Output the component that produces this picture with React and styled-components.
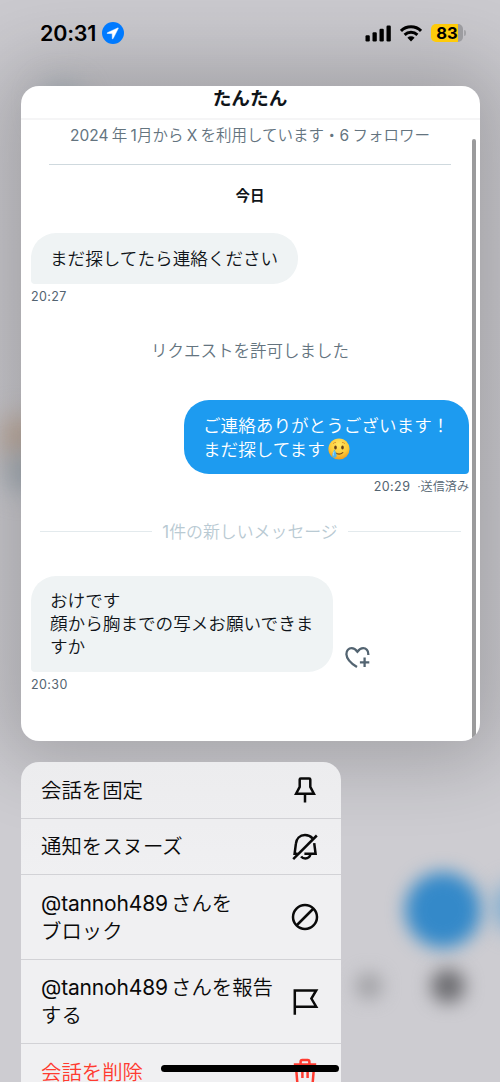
import React from 'react'
import styled, { createGlobalStyle } from 'styled-components'

const StatusBar = () => (
    <Status>
        <Clock>
            <Time>20:31</Time>
            <svg width="22" height="22" viewBox="0 0 22 22">
                <circle cx="11" cy="11" r="11" fill="#007aff" />
                <path d="M15.8 5.9 5.3 10.8q-.7.5.2.7l4.7.1.1 4.9q.3.8.8.1L16.3 6.3q.1-.6-.5-.4z" fill="#fff" stroke="#fff" strokeWidth=".5" strokeLinejoin="round" />
            </svg>
        </Clock>
        <Signals>
            <svg width="26" height="17" viewBox="0 0 26 17">
                <rect x="0.5" y="10.3" width="4.3" height="6.2" rx="1.2" />
                <rect x="7.5" y="7.3" width="4.3" height="9.2" rx="1.2" />
                <rect x="14.5" y="3.8" width="4.3" height="12.7" rx="1.2" />
                <rect x="21.5" y="0.5" width="4.3" height="16" rx="1.2" />
            </svg>
            <svg width="22" height="17" viewBox="0 0 22 17" fill="none" stroke="#000" strokeWidth="2.9">
                <path d="M1 5.9a14.3 14.3 0 0 1 20 0" />
                <path d="M4.6 9.9a9.2 9.2 0 0 1 12.8 0" />
                <path d="M7.4 12.8a5.2 5.2 0 0 1 7.2 0L11 16.4z" fill="#000" stroke="none" />
            </svg>
            <Battery>
                <Level>83</Level>
                <Tip />
            </Battery>
        </Signals>
    </Status>
)

const TearFace = () => (
    <Emoji viewBox="0 0 22 22">
        <defs>
            <radialGradient id="face" cx=".5" cy=".3" r=".75">
                <stop offset="0" stopColor="#ffe765" />
                <stop offset=".6" stopColor="#fdc936" />
                <stop offset="1" stopColor="#ec8f19" />
            </radialGradient>
        </defs>
        <circle cx="11" cy="11" r="10.6" fill="url(#face)" />
        <path d="M5 5.8q1.2-1.5 3-1.4M14 4.4q1.8-.1 3 1.4" fill="none" stroke="#d8922a" strokeWidth=".9" />
        <ellipse cx="7.5" cy="9.4" rx="1.3" ry="2" fill="#68401a" />
        <ellipse cx="14.5" cy="9.4" rx="1.3" ry="2" fill="#68401a" />
        <path d="M7.2 14.6q3.9 3.2 7.6 0" fill="none" stroke="#7c4a18" strokeWidth="1.2" strokeLinecap="round" />
        <path d="M6.4 11.2q-2.3 4.3-2.2 6.3.2 2.2 2.3 2.3 2.2-.1 2.2-2.4 0-2-2.3-6.2z" fill="#4eb5ee" />
        <path d="M6.1 13.5q-1.1 2.2-.8 4" fill="none" stroke="#b5e7ff" strokeWidth=".9" />
    </Emoji>
)

const AddReaction = () => (
    <svg width="26" height="22" viewBox="0 0 26 22" fill="none" stroke="#536471" strokeWidth="2.3">
        <path d="M12 20.1C5.6 16.1 1.6 12 1.4 7.2 1.3 3.4 3.8 1.2 6.6 1.2c2.6 0 4.3 1.5 5.8 3.5 1.5-2 3.2-3.5 5.8-3.5 2.8 0 5.2 2.2 5.1 5.9v1" />
        <path d="M19.6 10.6v9.3M14.9 15.3h9.4" />
    </svg>
)

const PinIcon = () => (
    <Icon viewBox="0 0 28 28">
        <path d="M9.8 2.4h8.4q1.1 0 1.1 1.1v7.4l3.6 6.8H5.1l3.6-6.8V3.5q0-1.1 1.1-1.1zM14 17.7v8.9" />
    </Icon>
)

const BellOffIcon = () => (
    <Icon viewBox="0 0 28 28">
        <path d="M2.2 26.1 25.8 2.5" />
        <path d="M21.6 5.3C19.6 3.1 17 2 14 2c-5.3 0-8.7 3.8-9.1 8.7L3.6 20.8h3M23.2 10.2l1.4 10.6H13.4M19.5 21.2c-.7 2.6-2.7 4.2-5.2 4.2-1.8 0-3.2-.7-4.2-2" />
    </Icon>
)

const BlockIcon = () => (
    <Icon viewBox="0 0 28 28">
        <circle cx="14" cy="14" r="12" />
        <path d="M5.5 22.5 22.5 5.5" />
    </Icon>
)

const FlagIcon = () => (
    <Icon viewBox="0 0 28 28">
        <path d="M3.8 26.8V2.5h21.4l-4.8 8.1 4.8 8.1H3.8" />
    </Icon>
)

const TrashIcon = () => (
    <Icon viewBox="0 0 28 28">
        <path d="M2.8 6.5h22.4M9.6 6.3V3.8q0-1.7 1.7-1.7h5.4q1.7 0 1.7 1.7v2.5M4.8 6.5l1.5 18q.2 1.7 1.9 1.7h11.6q1.7 0 1.9-1.7l1.5-18M11.4 11v9M16.6 11v9" />
    </Icon>
)

const actions = [
    { lines: ['会話を固定'], icon: <PinIcon /> },
    { lines: ['通知をスヌーズ'], icon: <BellOffIcon /> },
    { handle: '@tannoh489', lines: ['さんを', 'ブロック'], icon: <BlockIcon /> },
    { handle: '@tannoh489', lines: ['さんを報告', 'する'], icon: <FlagIcon /> },
    { lines: ['会話を削除'], icon: <TrashIcon />, danger: true },
]

const App = () => {
    return (
        <Screen>
            <GlobalStyle />
            <Backdrop>
                <Blob $x={443} $y={910} $size={76} $blur={9} $color="#3489c9" />
                <Blob $x={518} $y={907} $size={50} $blur={11} $color="#7dacd0" />
                <Blob $x={369} $y={986} $size={26} $blur={9} $color="#a0a0a4" />
                <Blob $x={448} $y={986} $size={34} $blur={9} $color="#6c6c70" />
                <Blob $x={20} $y={438} $size={44} $blur={14} $color="#c0aa9a" />
                <Blob $x={24} $y={472} $size={40} $blur={13} $color="#a3adb6" />
                <Blob $x={62} $y={104} $size={40} $blur={14} $color="#a9b5bd" />
            </Backdrop>
            <StatusBar />
            <Preview>
                <Header>たんたん</Header>
                <Thread>
                    <Joined><Num>2024</Num> 年 <Num>1</Num>月から <Num>X</Num> を利用しています・<Num>6</Num> フォロワー</Joined>
                    <Day>今日</Day>
                    <Bubble $width={267} $height={51}>まだ探してたら連絡ください</Bubble>
                    <Stamp>20:27</Stamp>
                    <Notice>リクエストを許可しました</Notice>
                    <Bubble $mine $width={285} $height={74}>
                        ご連絡ありがとうございます！<br />
                        まだ探してます<TearFace />
                    </Bubble>
                    <Stamp $mine>20:29 <small>·送信済み</small></Stamp>
                    <Unread><span><Num>1</Num>件の新しいメッセージ</span></Unread>
                    <Incoming>
                        <Bubble $width={302} $height={96}>
                            おけです<br />
                            顔から胸までの写メお願いできま<br />
                            すか
                        </Bubble>
                        <AddReaction />
                    </Incoming>
                    <Stamp>20:30</Stamp>
                </Thread>
                <Scrollbar />
            </Preview>
            <Menu>
                {actions.map((a) => (
                    <Action key={a.lines.join('')} $danger={a.danger} $tall={a.lines.length > 1}>
                        <Label>
                            {a.handle && <Handle>{a.handle}</Handle>}
                            {a.lines[0]}
                            {a.lines[1] && <><br />{a.lines[1]}</>}
                        </Label>
                        {a.icon}
                    </Action>
                ))}
            </Menu>
            <HomeIndicator />
        </Screen>
    )
}

export default App

const GlobalStyle = createGlobalStyle`
    body {
        margin: 0;
        font-family: Inter, "Noto Sans CJK JP", sans-serif;
        font-weight: 350;
    }

    * {
        box-sizing: border-box;
    }
`
const Screen = styled.div`
    position: relative;
    width: 500px;
    height: 1082px;
    overflow: hidden;
    background: linear-gradient(#cac9ce, #cdccd1 800px);
`
const Backdrop = styled.div`
    position: absolute;
    inset: 0;
    overflow: hidden;
`
const Blob = styled.div`
    position: absolute;
    left: ${(p) => p.$x - p.$size / 2}px;
    top: ${(p) => p.$y - p.$size / 2}px;
    width: ${(p) => p.$size}px;
    height: ${(p) => p.$size}px;
    border-radius: 50%;
    background: ${(p) => p.$color};
    filter: blur(${(p) => p.$blur}px);
`
const Status = styled.div`
    position: relative;
    z-index: 1;
    height: 86px;
    padding: 22px 34px 0 40px;
    display: flex;
    justify-content: space-between;
    align-items: flex-start;
`
const Clock = styled.div`
    display: flex;
    align-items: center;
    gap: 4px;
    height: 22px;
`
const Time = styled.span`
    width: 57.5px;
    font-size: 21.5px;
    font-weight: 600;
    letter-spacing: -0.2px;
    white-space: nowrap;
`
const Signals = styled.div`
    display: flex;
    align-items: center;
    gap: 9px;
    height: 22px;
`
const Battery = styled.div`
    display: flex;
    align-items: center;
    gap: 1px;
`
const Level = styled.div`
    width: 32px;
    height: 18px;
    border-radius: 5px;
    background: linear-gradient(90deg, #fecb0a 83%, #9c9ca0 83%);
    font-size: 16.5px;
    font-weight: 700;
    line-height: 18px;
    text-align: center;
`
const Tip = styled.div`
    width: 2px;
    height: 6px;
    border-radius: 0 3px 3px 0;
    background: #a3a3a7;
`
const Preview = styled.div`
    position: relative;
    width: 459px;
    height: 655px;
    margin-left: 20.5px;
    border-radius: 18px;
    overflow: hidden;
    background: #fff;
    box-shadow: 0 0 76px 22px rgba(0, 0, 0, 0.2);
`
const Header = styled.div`
    height: 34px;
    padding-top: 1px;
    border-bottom: 2px solid #f5f5f6;
    color: #0f1419;
    font-size: 18.7px;
    font-weight: 700;
    line-height: 24px;
    text-align: center;
`
const Thread = styled.div`
    display: flex;
    flex-direction: column;
    padding: 0 10.5px;
`
const Num = styled.span`
    font-weight: 400;
`
const Joined = styled.div`
    height: 45px;
    margin: 0 18px;
    border-bottom: 1.5px solid #cfd9de;
    color: #64747f;
    font-size: 15.5px;
    line-height: 32px;
    text-align: center;
    white-space: nowrap;
    word-spacing: -1.1px;
`
const Day = styled.div`
    height: 68px;
    color: #0f1419;
    font-size: 14.5px;
    font-weight: 700;
    line-height: 62px;
    text-align: center;
`
const Bubble = styled.div`
    flex: none;
    align-self: ${(p) => (p.$mine ? 'flex-end' : 'flex-start')};
    width: ${(p) => p.$width}px;
    height: ${(p) => p.$height}px;
    padding: ${(p) => (p.$height > 90 ? 14 : 15)}px 0 0 19px;
    border-radius: ${(p) => (p.$mine ? '25px 25px 4px 25px' : '25px 25px 25px 4px')};
    background: ${(p) => (p.$mine ? '#1d9bf0' : '#eff3f4')};
    color: ${(p) => (p.$mine ? '#fff' : '#0f1419')};
    font-size: 17.6px;
    line-height: 22.9px;
    white-space: nowrap;
`
const Emoji = styled.svg`
    width: 22px;
    height: 22px;
    margin-left: 3.5px;
    vertical-align: -4.5px;
`
const Stamp = styled.div`
    height: 24px;
    color: #536471;
    font-size: 12.5px;
    font-weight: 400;
    letter-spacing: 0.4px;
    line-height: 25px;
    text-align: ${(p) => (p.$mine ? 'right' : 'left')};

    small{
        margin-left: 3px;
        font-size: 12.1px;
        font-weight: 350;
        letter-spacing: 0;
    }
`
const Notice = styled.div`
    height: 92px;
    color: #64747f;
    font-size: 16.5px;
    line-height: 86px;
    text-align: center;
`
const Unread = styled.div`
    display: flex;
    align-items: center;
    justify-content: center;
    height: 78px;
    padding: 0 8.5px 11px;
    color: #b9cad3;
    font-size: 16.9px;
    white-space: nowrap;

    span{
        margin-bottom: 1.5px;
    }

    &::before, &::after{
        content: '';
        flex: 1;
        height: 1px;
        background: #e3eaed;
    }

    &::before{
        margin-right: 10px;
    }

    &::after{
        margin-left: 10px;
    }
`
const Incoming = styled.div`
    display: flex;
    align-items: flex-end;
    gap: 12px;

    svg{
        margin-bottom: 3px;
    }
`
const Scrollbar = styled.div`
    position: absolute;
    top: 53px;
    right: 3.5px;
    width: 4px;
    height: 602px;
    border-radius: 2px;
    background: #9b9b9c;
`
const Menu = styled.div`
    position: relative;
    width: 320.5px;
    height: 340px;
    margin: 21px 0 0 20.5px;
    border-radius: 18px;
    overflow: hidden;
    background: linear-gradient(#ececee, #f0f0f2 120px);
`
const Action = styled.div`
    display: flex;
    align-items: center;
    justify-content: space-between;
    height: ${(p) => (p.$tall ? 84.5 : 56.5)}px;
    padding: 1px 22px 0 20.5px;
    border-bottom: 1px solid #d2d2d6;
    color: ${(p) => (p.$danger ? '#ff3b30' : '#0a0a0a')};
`
const Label = styled.div`
    padding-top: 1px;
    font-size: 20.4px;
    line-height: 28px;
    white-space: nowrap;
`
const Handle = styled.span`
    display: inline-block;
    width: 130px;
    font-size: 21px;
    font-weight: 400;
    letter-spacing: -0.15px;
`
const Icon = styled.svg`
    flex: none;
    width: 28px;
    height: 28px;
    fill: none;
    stroke: currentColor;
    stroke-width: 2.5;
`
const HomeIndicator = styled.div`
    position: absolute;
    left: 161px;
    bottom: 10.5px;
    width: 178px;
    height: 6.5px;
    border-radius: 4px;
    background: #000;
`
